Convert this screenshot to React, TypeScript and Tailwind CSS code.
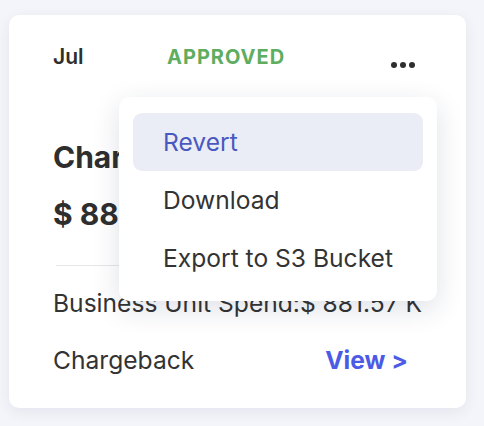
import React from "react";

const menuItems = ["Revert", "Download", "Export to S3 Bucket"];

export default function App() {
  return (
    <div
      className="w-[484px] h-[426px] bg-[#f4f5fa] pt-[15px] pl-[9px]"
      style={{ fontFamily: "Inter, 'Liberation Sans', sans-serif" }}
    >
      <div className="relative w-[457px] h-[393px] bg-white rounded-[10px] shadow-[0_4px_14px_rgba(40,50,90,0.08)] pl-[44px] pr-[58px]">
        {/* Header */}
        <div className="flex items-center h-[84px]">
          <span className="text-[21px] font-semibold text-[#2e2e2e] w-[114px]">Jul</span>
          <span className="text-[20px] font-bold text-[#5fad5f] tracking-[0.05em]">APPROVED</span>
          <div className="ml-auto mt-[16px] flex gap-[3px] mr-[-7px]">
            <span className="w-[6px] h-[6px] rounded-full bg-[#2e2e2e]" />
            <span className="w-[6px] h-[6px] rounded-full bg-[#2e2e2e]" />
            <span className="w-[6px] h-[6px] rounded-full bg-[#2e2e2e]" />
          </div>
        </div>

        {/* Title */}
        <div className="text-[30px] font-bold text-[#2e2e2e] leading-[36px] mt-[40px] whitespace-nowrap">
          Chargeback
        </div>
        <div className="text-[30px] font-bold text-[#2e2e2e] leading-[36px] mt-[21px] whitespace-nowrap">
          $ 881.57 K
        </div>

        <div className="h-px bg-[#e6e6e8] mt-[33px] ml-[3px]" />

        <div className="text-[24.6px] text-[#333] mt-[23px] leading-[28px] whitespace-nowrap">
          Business Unit Spend:$ 881.57 K
        </div>
        <div className="flex items-center justify-between mt-[29px] leading-[28px]">
          <span className="text-[24.6px] text-[#333]">Chargeback</span>
          <span className="text-[24.6px] font-bold text-[#4b5be6]">View &gt;</span>
        </div>

        {/* Dropdown menu */}
        <div className="absolute left-[110px] top-[82px] w-[318px] bg-white rounded-[10px] shadow-[0_8px_28px_rgba(30,40,80,0.14)] px-[14px] pt-[16px] pb-[14px]">
          {menuItems.map((item, i) => (
            <div
              key={item}
              className={
                "h-[58px] flex items-center pl-[30px] rounded-[9px] text-[24.6px] " +
                (i === 0 ? "bg-[#eaedf6] text-[#4a59bf]" : "text-[#333]")
              }
            >
              {item}
            </div>
          ))}
        </div>
      </div>
    </div>
  );
}
